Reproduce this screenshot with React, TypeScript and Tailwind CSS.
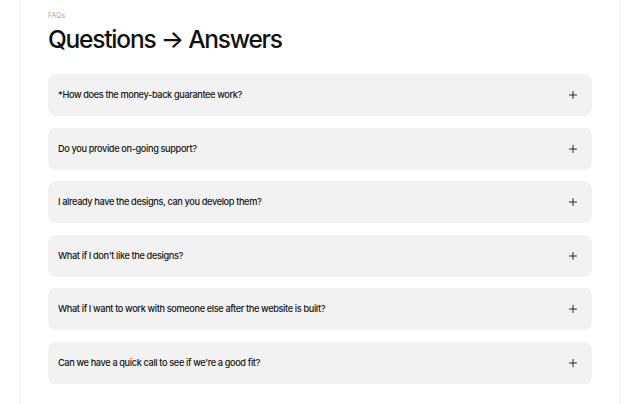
import { Plus } from "lucide-react"

const questions = [
  "*How does the money-back guarantee work?",
  "Do you provide on-going support?",
  "I already have the designs, can you develop them?",
  "What if I don't like the designs?",
  "What if I want to work with someone else after the website is built?",
  "Can we have a quick call to see if we're a good fit?",
]

export default function App() {
  return (
    <div className="min-h-[404px] w-[640px] bg-white font-['Inter',sans-serif] text-[#111]">
      <div className="mx-auto min-h-[404px] w-[602px] border-x border-[#f4f4f4] px-[28px] pt-[11px]">
        <p className="text-[7px] leading-[10px] text-[#a8a8a8]">FAQs</p>
        <h1 className="mt-[3px] text-[24.5px] font-medium leading-[30px] tracking-[-0.05em]">
          Questions → Answers
        </h1>
        <div className="mt-[20px] flex flex-col gap-[11.5px]">
          {questions.map((q) => (
            <div
              key={q}
              className="flex h-[42px] items-center justify-between rounded-[8px] bg-[#f2f2f2] pl-[10px] pr-[13px]"
            >
              <span className="text-[9.2px] font-medium tracking-[-0.04em] text-[#151515]">{q}</span>
              <Plus className="h-[12px] w-[12px] text-[#111]" strokeWidth={1.8} />
            </div>
          ))}
        </div>
      </div>
    </div>
  )
}
